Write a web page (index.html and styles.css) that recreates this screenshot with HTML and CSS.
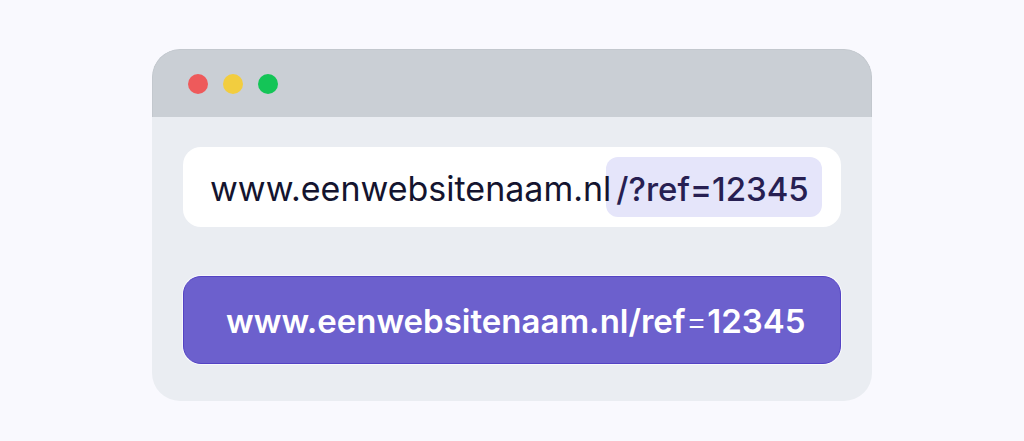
FILE: index.html
```html
<!DOCTYPE html>
<html lang="nl">

<head>
    <meta charset="UTF-8">
    <meta name="viewport" content="width=device-width, initial-scale=1.0">
    <title>www.eenwebsitenaam.nl</title>
    <link rel="stylesheet" href="styles.css">
</head>

<body>
    <main class="browser">
        <div class="title-bar">
            <span class="dot red"></span>
            <span class="dot yellow"></span>
            <span class="dot green"></span>
        </div>
        <div class="content">
            <div class="address">
                <span class="domain">www.eenwebsitenaam.nl</span>
                <span class="query">/?ref=12345</span>
            </div>
            <a class="result" href="#">www.eenwebsitenaam.nl/ref<span class="equals">=</span>12345</a>
        </div>
    </main>
</body>

</html>
```
FILE: styles.css
```css
* {
    box-sizing: border-box;
}

body {
    margin: 0;
    min-height: 100vh;
    padding: 49px 16px 40px;
    background-color: #f9f9fe;
    font-family: "Inter", "Liberation Sans", sans-serif;
}

.browser {
    max-width: 720px;
    margin: 0 auto;
    border-radius: 28px;
    overflow: hidden;
    background-color: #eaedf2;
}

.title-bar {
    display: flex;
    align-items: center;
    gap: 15px;
    height: 68px;
    padding: 0 35px;
    background-color: #cacfd5;
    border: 1px solid #c3c8ce;
    border-bottom: none;
    border-radius: 28px 28px 0 0;
}

.dot {
    width: 20px;
    height: 20px;
    border-radius: 50%;
}

.red {
    background-color: #ee5a5b;
}

.yellow {
    background-color: #f2cd3f;
}

.green {
    background-color: #14c557;
}

.content {
    display: flex;
    flex-direction: column;
    gap: 49px;
    padding: 30px 31px 37px;
}

.address {
    display: flex;
    align-items: center;
    justify-content: space-between;
    min-height: 80px;
    padding: 10px 20px 10px 27px;
    border-radius: 18px;
    background-color: #ffffff;
    white-space: nowrap;
}

.domain {
    z-index: 1;
    padding-top: 4px;
    color: #14142f;
    font-size: 34px;
    line-height: 56px;
}

.query {
    padding: 4px 13px 0 10px;
    margin-left: -5px;
    border-radius: 12px;
    background-color: #e5e5fa;
    color: #271f52;
    font-size: 33px;
    font-weight: 500;
    line-height: 56px;
}

.result {
    display: block;
    padding: 2px 32px 0 42px;
    border: 1px solid #5443c4;
    border-radius: 18px;
    background-color: #6c60cd;
    box-shadow: 0 0 0 1px #f7f8fc;
    color: #ffffff;
    font-size: 33px;
    font-weight: 600;
    line-height: 84px;
    text-decoration: none;
    white-space: nowrap;
}

.equals {
    font-weight: 300;
}
```
